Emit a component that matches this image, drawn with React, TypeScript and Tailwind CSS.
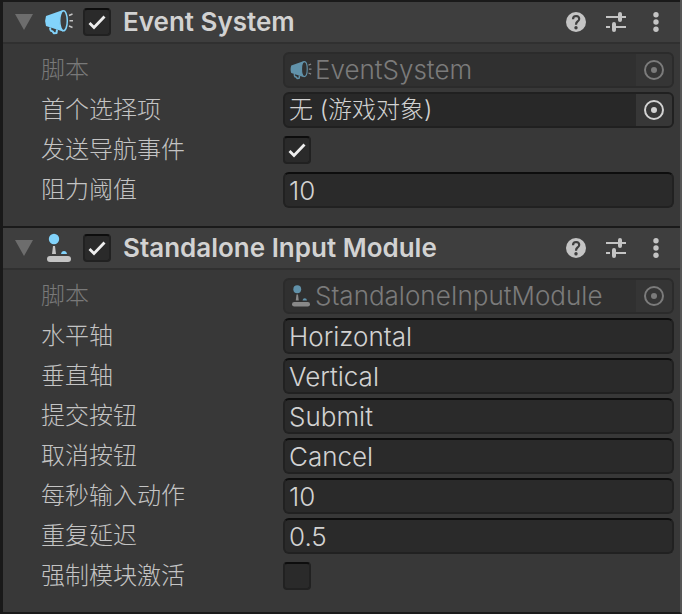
import { useId, type ReactNode } from 'react';

interface IconProps {
  className?: string;
}

function MegaphoneIcon({ className }: IconProps) {
  return (
    <svg viewBox="0 0 32 32" className={className} aria-hidden="true">
      <path d="M7 21.5 L7.5 24 Q7.800 25.300 9.500 25.300 L11 27.300 L13.500 27 L14 23.500" fill="none" stroke="#82d3fb" strokeWidth="2" strokeLinejoin="round" />
      <path d="M20 4 L3 10 Q1.200 15 3 20 L20 25.500 Q12.500 15 20 4Z" fill="#82d3fb" />
      <ellipse cx="20.500" cy="14.800" rx="3.800" ry="10" fill="none" stroke="#82d3fb" strokeWidth="1.500" />
      <path d="M26 9.500 L29.500 8 M26.500 14.800 H30 M26 20 L29.500 21.500" stroke="#c4c4c4" strokeWidth="1.500" />
    </svg>
  );
}

function JoystickIcon({ className }: IconProps) {
  return (
    <svg viewBox="0 0 32 32" className={className} aria-hidden="true">
      <circle cx="11" cy="7" r="5.2" fill="#82d3fb" />
      <path d="M10 14 H12 L13 22 H9Z" fill="#c4c4c4" />
      <path d="M18 22 Q18.5 19 21 19 Q23.500 19 24 22Z" fill="#82d3fb" />
      <rect x="4" y="24" width="24" height="6" rx="3" fill="#c4c4c4" />
    </svg>
  );
}

function HelpIcon() {
  return (
    <svg viewBox="0 0 20 20" className="size-5" aria-hidden="true">
      <circle cx="10" cy="10" r="10" fill="#c4c4c4" />
      <path d="M7 7.200 Q7 4 10.200 4 Q13.300 4.200 13.200 7 Q13.100 8.500 11.500 9.500 Q10 10.500 10 12.800" fill="none" stroke="#3e3e3e" strokeWidth="2.2" />
      <circle cx="10" cy="15.800" r="1.700" fill="#3e3e3e" />
    </svg>
  );
}

function PresetIcon() {
  return (
    <svg viewBox="0 0 20 20" className="size-5" aria-hidden="true">
      <path d="M0 5 H12 M16 5 H20 M0 15 H4 M10 15 H20" stroke="#c4c4c4" strokeWidth="2" />
      <path d="M14 2 V8 M8 12 V18" stroke="#c4c4c4" strokeWidth="4" strokeLinecap="round" />
    </svg>
  );
}

function MenuIcon() {
  return (
    <svg viewBox="0 0 20 20" className="size-5" aria-hidden="true">
      <circle cx="10" cy="2.700" r="2.700" fill="#c4c4c4" />
      <circle cx="10" cy="10" r="2.700" fill="#c4c4c4" />
      <circle cx="10" cy="17.300" r="2.700" fill="#c4c4c4" />
    </svg>
  );
}

interface CheckboxProps {
  id?: string;
  label?: string;
  checked?: boolean;
}

function Checkbox({ id, label, checked = false }: CheckboxProps) {
  return (
    <span className="grid size-7 shrink-0">
      <input
        id={id}
        type="checkbox"
        aria-label={label}
        defaultChecked={checked}
        className="peer col-start-1 row-start-1 size-7 appearance-none rounded border-2 border-[#212121] border-t-[#0d0d0d] bg-[#2a2a2a]"
      />
      <svg viewBox="0 0 28 28" className="pointer-events-none invisible col-start-1 row-start-1 size-7 peer-checked:visible" aria-hidden="true">
        <path d="M6.500 15 L11 19.500 L21.500 8.500" fill="none" stroke="#eeeeee" strokeWidth="2.800" />
      </svg>
    </span>
  );
}

interface RowProps {
  id?: string;
  label: string;
  disabled?: boolean;
  children: ReactNode;
}

function Row({ id, label, disabled, children }: RowProps) {
  return (
    <div className="flex h-10 items-center">
      <label htmlFor={id} className={`w-[242px] shrink-0 ${disabled ? 'text-[#797979]' : 'text-[#c4c4c4]'}`}>
        {label}
      </label>
      {children}
    </div>
  );
}

function TextRow({ label, value }: { label: string; value: string }) {
  const id = useId();
  return (
    <Row id={id} label={label}>
      <input
        id={id}
        type="text"
        defaultValue={value}
        className="h-9 min-w-0 flex-1 rounded-md border-2 border-[#212121] border-t-[#0d0d0d] bg-[#2a2a2a] px-1 text-[26px] text-[#d2d2d2] outline-none"
      />
    </Row>
  );
}

function CheckRow({ label, checked }: { label: string; checked?: boolean }) {
  const id = useId();
  return (
    <Row id={id} label={label}>
      <Checkbox id={id} checked={checked} />
    </Row>
  );
}

interface ObjectRowProps {
  label: string;
  value: string;
  icon?: ReactNode;
  disabled?: boolean;
}

function ObjectRow({ label, value, icon, disabled }: ObjectRowProps) {
  const id = useId();
  return (
    <Row id={id} label={label} disabled={disabled}>
      <div
        className={`flex h-9 min-w-0 flex-1 overflow-hidden rounded-md border-2 ${
          disabled ? 'border-[#2b2b2b] bg-[#303030] text-[#7b7b7b]' : 'border-[#202020] bg-[#282828] text-[#d2d2d2]'
        }`}
      >
        <div className="flex min-w-0 flex-1 items-center pl-1">
          {icon}
          <span className={`truncate ${icon ? 'ml-0.5 text-[26px]' : ''}`}>{value}</span>
        </div>
        <button
          id={id}
          type="button"
          disabled={disabled}
          className={`flex w-9 items-center justify-center ${disabled ? 'bg-[#353535]' : 'bg-[#373737]'}`}
        >
          <svg viewBox="0 0 20 20" className="size-5" aria-hidden="true">
            <circle cx="10" cy="10" r="9" fill="none" stroke="currentColor" strokeWidth="2" />
            <circle cx="10" cy="10" r="3" fill="currentColor" />
          </svg>
        </button>
      </div>
    </Row>
  );
}

interface ComponentPanelProps {
  title: string;
  icon: ReactNode;
  children: ReactNode;
}

function ComponentPanel({ title, icon, children }: ComponentPanelProps) {
  return (
    <section className="border-t-2 border-[#1a1a1a]">
      <header className="flex h-[42px] items-center border-b-2 border-[#303030] bg-[#3e3e3e] pr-3.5 pl-3">
        <button type="button" aria-label={`Collapse ${title}`} className="mr-2.5">
          <svg viewBox="0 0 18 16" className="h-4 w-[18px]" aria-hidden="true">
            <path d="M0 0 H18 L9 16Z" fill="#6d6d6d" />
          </svg>
        </button>
        {icon}
        <span className="mr-3 ml-2 flex">
          <Checkbox label={title} checked />
        </span>
        <h2 className="flex-1 truncate text-[26px] font-semibold text-[#d2d2d2]">{title}</h2>
        <div className="flex gap-5">
          <button type="button" aria-label="Help">
            <HelpIcon />
          </button>
          <button type="button" aria-label="Presets">
            <PresetIcon />
          </button>
          <button type="button" aria-label="More">
            <MenuIcon />
          </button>
        </div>
      </header>
      <div className="pt-1.5 pr-1.5 pb-4 pl-[38px]">{children}</div>
    </section>
  );
}

export default function App() {
  return (
    <main className="border-r-2 border-b-2 border-l-[3px] border-r-[#555555] border-b-[#1a1a1a] border-l-[#191919] bg-[#383838] font-['Inter','Noto_Sans_CJK_SC',sans-serif] text-2xl font-light">
      <ComponentPanel title="Event System" icon={<MegaphoneIcon className="size-8" />}>
        <ObjectRow label="脚本" value="EventSystem" icon={<MegaphoneIcon className="size-6 opacity-60" />} disabled />
        <ObjectRow label="首个选择项" value="无 (游戏对象)" />
        <CheckRow label="发送导航事件" checked />
        <TextRow label="阻力阈值" value="10" />
      </ComponentPanel>
      <ComponentPanel title="Standalone Input Module" icon={<JoystickIcon className="size-8" />}>
        <ObjectRow label="脚本" value="StandaloneInputModule" icon={<JoystickIcon className="size-6 opacity-60" />} disabled />
        <TextRow label="水平轴" value="Horizontal" />
        <TextRow label="垂直轴" value="Vertical" />
        <TextRow label="提交按钮" value="Submit" />
        <TextRow label="取消按钮" value="Cancel" />
        <TextRow label="每秒输入动作" value="10" />
        <TextRow label="重复延迟" value="0.5" />
        <CheckRow label="强制模块激活" />
      </ComponentPanel>
    </main>
  );
}
